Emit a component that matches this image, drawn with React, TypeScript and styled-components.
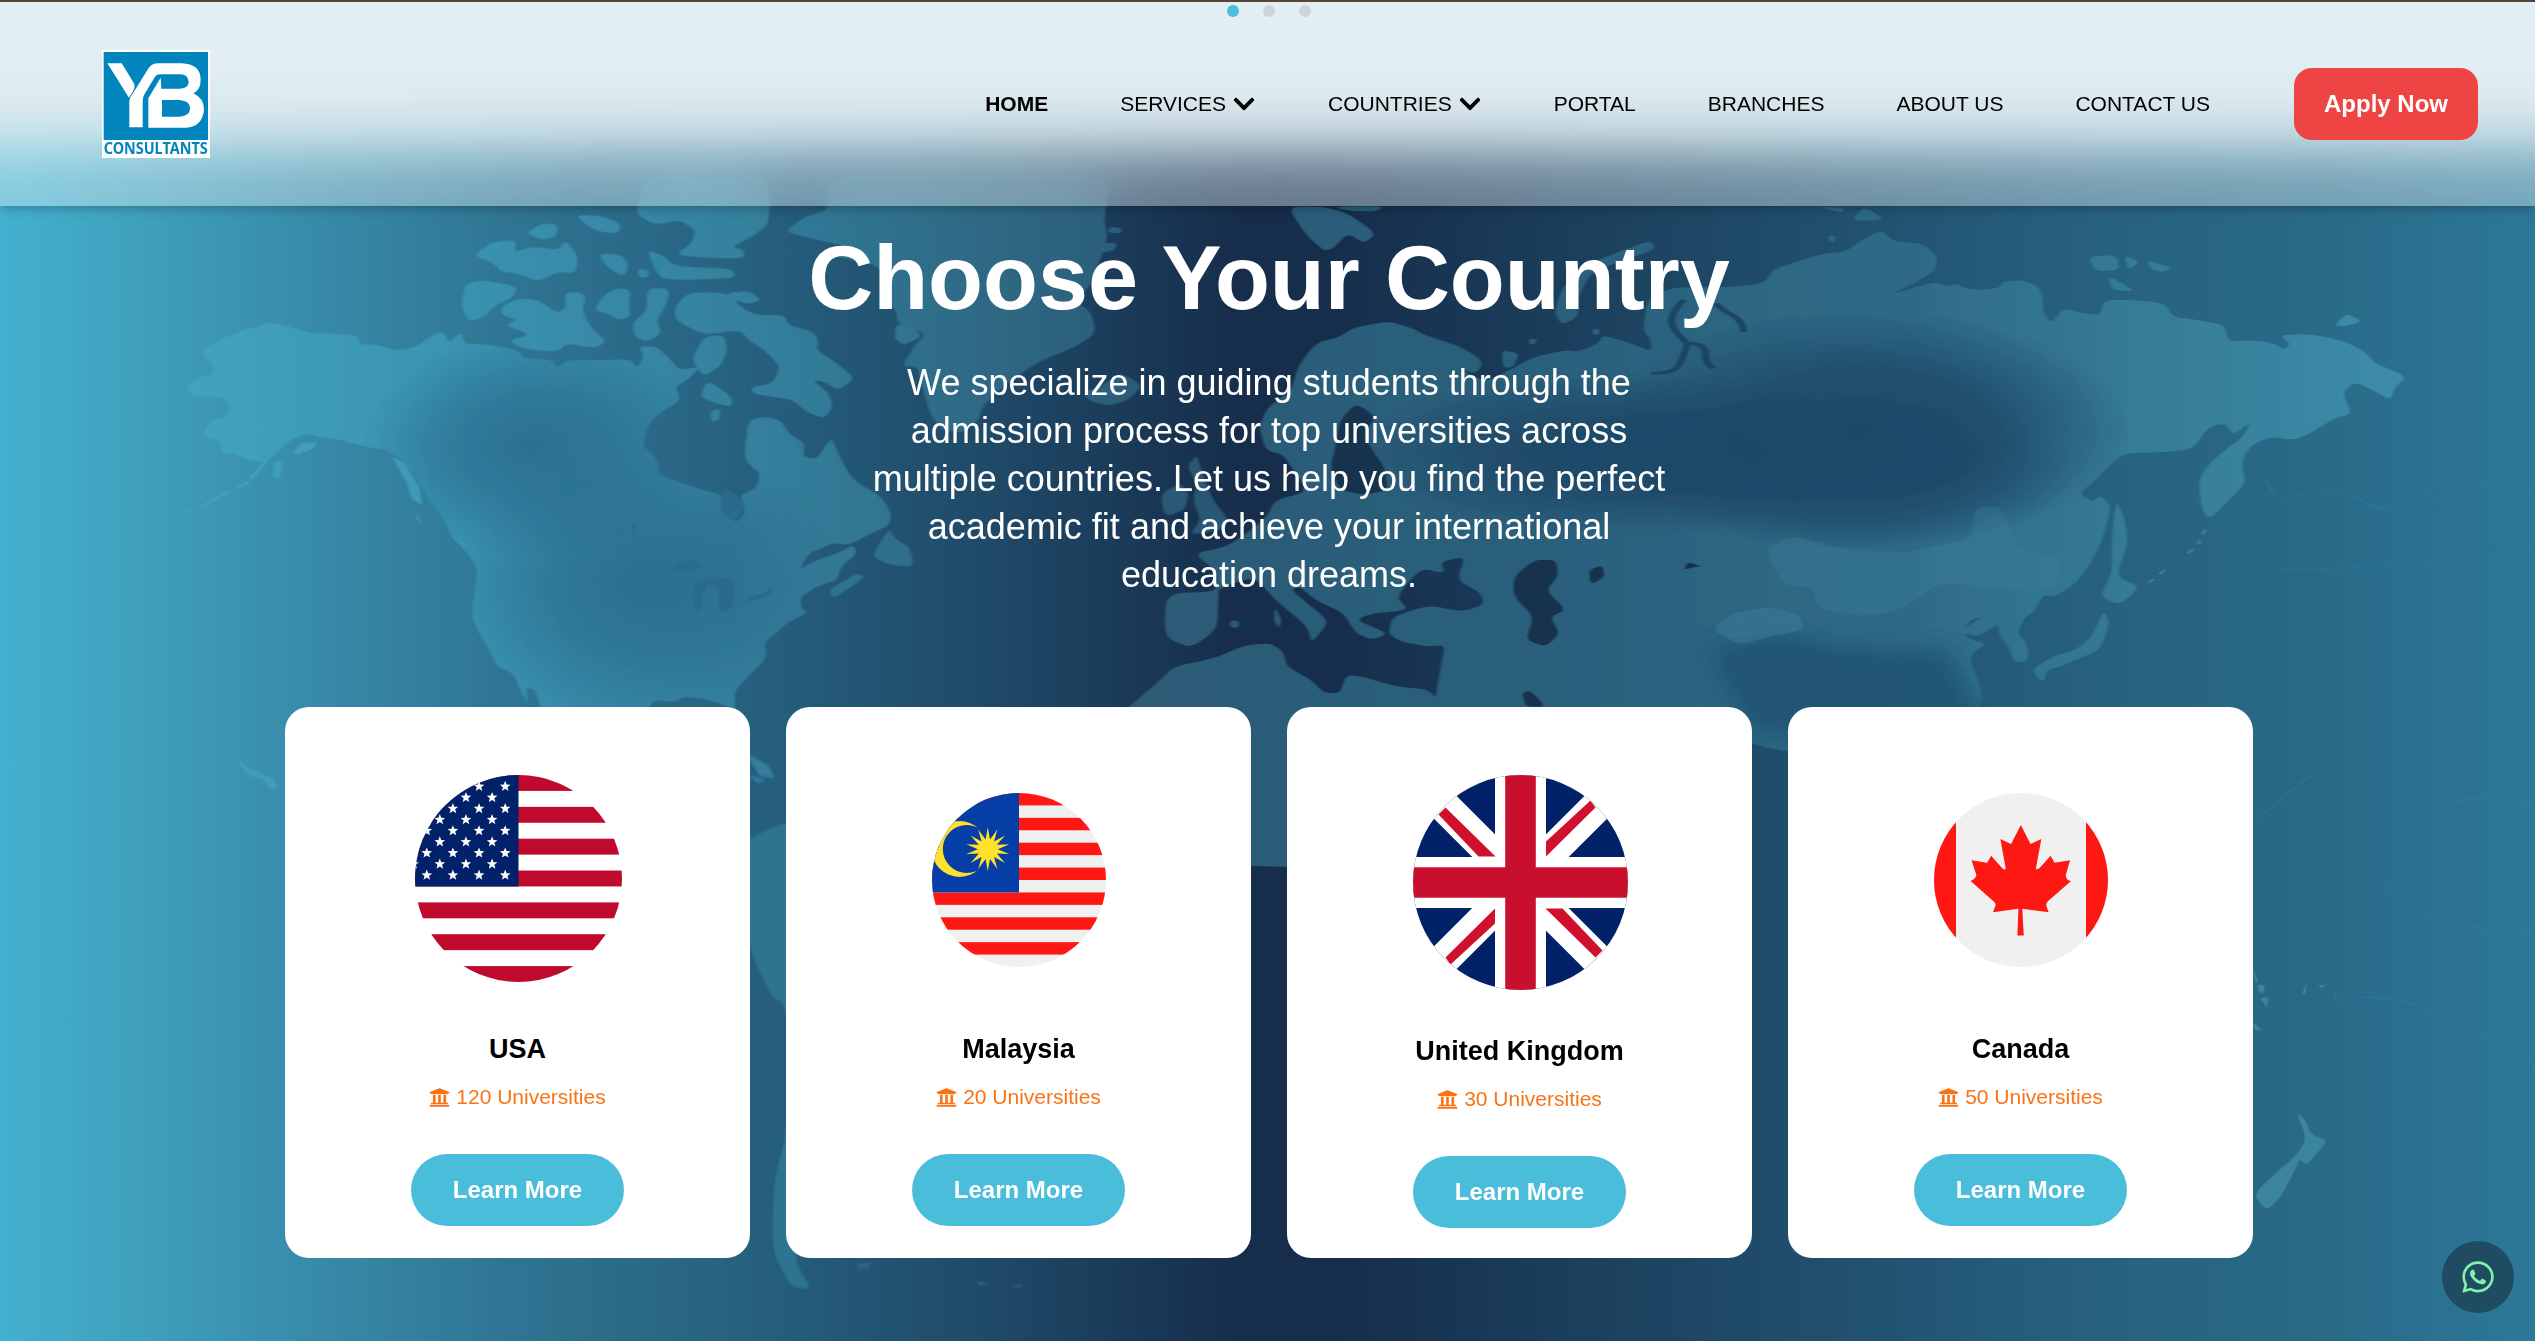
import React from "react";
import styled, { createGlobalStyle } from "styled-components";
import { FaChevronDown, FaUniversity, FaWhatsapp } from "react-icons/fa";

const GlobalStyle = createGlobalStyle`
  *, *::before, *::after { box-sizing: border-box; }
  body {
    margin: 0;
    font-family: "Liberation Sans", Arial, sans-serif;
    background: #2c6f8e;
    overflow: hidden;
  }
`;

const Page = styled.div`
  position: relative;
  height: 1341px;
  overflow: hidden;
  display: flex;
  flex-direction: column;
`;

const Header = styled.header`
  position: absolute;
  inset: 0 0 auto 0;
  z-index: 10;
  height: 206px;
  padding: 0 57px 0 102px;
  border-top: 2px solid #5a423c;
  display: flex;
  align-items: center;
  justify-content: space-between;
  background:
    linear-gradient(
      to bottom,
      rgba(225, 238, 244, 1) 60px,
      rgba(223, 236, 241, 0.98) 92px,
      rgba(219, 233, 238, 0.93) 110px,
      rgba(216, 232, 238, 0.85) 122px,
      rgba(214, 232, 238, 0.72) 134px,
      rgba(210, 231, 238, 0.54) 146px,
      rgba(205, 231, 238, 0.37) 158px,
      rgba(200, 231, 238, 0.22) 170px,
      rgba(190, 231, 240, 0.12) 182px,
      rgba(180, 231, 240, 0.06) 196px,
      rgba(170, 231, 240, 0.04) 204px
    ),
    rgba(255, 255, 255, 0.35);
  backdrop-filter: blur(24px);
  box-shadow: 0 6px 9px -1px rgba(0, 0, 0, 0.14), 0 3px 6px -2px rgba(0, 0, 0, 0.1);
`;

const Dots = styled.div`
  position: absolute;
  z-index: 11;
  top: 5px;
  left: 1227px;
  display: flex;
  gap: 24px;
`;

const Dot = styled.span<{ $active?: boolean }>`
  width: 12px;
  height: 12px;
  border-radius: 50%;
  background: ${(p) => (p.$active ? "#4abfdc" : "#d1d3dc")};
`;

const Nav = styled.nav`
  display: flex;
  align-items: center;
  gap: 72px;
  margin-left: auto;
  margin-right: 84px;
`;

const NavLink = styled.a<{ $active?: boolean }>`
  display: flex;
  align-items: center;
  gap: 6px;
  font-size: 21px;
  line-height: 30px;
  color: #000;
  white-space: nowrap;
  font-weight: ${(p) => (p.$active ? 700 : 400)};
  svg { font-size: 24px; }
`;

const ApplyButton = styled.button`
  width: 184px;
  height: 72px;
  border: 0;
  border-radius: 18px;
  background: #ef4444;
  color: #fff;
  font: 700 24px/36px "Liberation Sans", Arial, sans-serif;
  padding: 0;
  white-space: nowrap;
`;

const Hero = styled.section`
  position: relative;
  flex: 1;
  padding: 233px 0 0 3px;
  display: flex;
  flex-direction: column;
  align-items: center;
`;

const MapSvg = styled.svg`
  position: absolute;
  inset: 0;
  width: 2535px;
  height: 1341px;
`;

const Title = styled.h1`
  position: relative;
  margin: 0;
  color: #fff;
  font-size: 90px;
  line-height: 90px;
  font-weight: 700;
`;

const Lead = styled.p`
  position: relative;
  margin: 36px 0 108px;
  width: 828px;
  color: #fff;
  text-align: center;
  font-size: 36px;
  line-height: 48px;
`;

const Cards = styled.div`
  position: relative;
  display: grid;
  grid-template-columns: repeat(4, 465px);
  gap: 36px;
`;

const Card = styled.article`
  height: 551px;
  border-radius: 24px;
  background: #fff;
  display: flex;
  flex-direction: column;
  align-items: center;
`;

const FlagBox = styled.div<{ $top: number; $height: number }>`
  flex: none;
  height: ${(p) => p.$height}px;
  padding: ${(p) => p.$top}px 0 0 1px;
  svg { display: block; }
`;

const Country = styled.h3`
  margin: 0 0 12px;
  font-size: 27px;
  line-height: 42px;
  color: #000;
`;

const Count = styled.p`
  margin: 0 0 42px;
  display: flex;
  align-items: center;
  gap: 6px;
  font-size: 21px;
  line-height: 30px;
  color: #f97316;
`;

const LearnMore = styled.button`
  flex: none;
  width: 213px;
  height: 72px;
  border: 0;
  border-radius: 36px;
  background: #4abddb;
  color: #fff;
  font: 700 24px/36px "Liberation Sans", Arial, sans-serif;
  padding: 0;
`;

const ChatButton = styled.button`
  position: absolute;
  z-index: 12;
  left: 2442px;
  top: 1241px;
  width: 72px;
  height: 72px;
  padding: 0;
  border: 0;
  border-radius: 50%;
  background: #1f4c60;
  color: #86efac;
  display: flex;
  align-items: center;
  justify-content: center;
  svg { font-size: 36px; }
`;

const LogoSvg = styled.svg`
  flex: none;
  overflow: visible;
`;

const Logo = () => (
  <LogoSvg width="108" height="108" viewBox="66 60 324 324">
    <rect x="66" y="60" width="324" height="324" fill="#fff" />
    <rect x="71" y="66" width="313" height="264" fill="#0284bd" />
    <path d="M82 100H125L161 158Q167 170 159 184L147 203Z" fill="#fff" />
    <path
      d="M148 292V216C148 204 152 200 160 188L206 114Q215 100 235 100H305Q362 102 362 150Q362 180 340 190Q372 205 372 238Q368 290 320 293H205V205L242 143L244 176H300Q326 174 326 155Q324 133 300 133H240Q230 133 225 140L192 195Q188 203 188 215V292Z"
      fill="#fff"
    />
    <path d="M246 210H300Q330 213 330 235Q330 258 300 260H246Z" fill="#0284bd" />
    <text x="71" y="373" fontFamily="'Noto Sans', 'Open Sans', sans-serif" fontWeight="700" fontSize="46" textLength="312" lengthAdjust="spacingAndGlyphs" fill="#0284bd">
      CONSULTANTS
    </text>
  </LogoSvg>
);

const starPath = (cx: number, cy: number, r: number, inner: number, points: number) => {
  const pts: string[] = [];
  for (let i = 0; i < points * 2; i++) {
    const a = (Math.PI * i) / points - Math.PI / 2;
    const rad = i % 2 ? inner : r;
    pts.push(`${(cx + rad * Math.cos(a)).toFixed(2)},${(cy + rad * Math.sin(a)).toFixed(2)}`);
  }
  return pts.join(" ");
};

const UsaFlag = () => {
  const size = 207;
  const stripe = size / 13;
  const stars: React.ReactNode[] = [];
  for (let row = 0; row < 9; row++) {
    for (let col = 0; col < 4; col++) {
      const x = 90.2 - col * 26.15 - (row % 2 ? 13.1 : 0);
      const y = 11.4 + row * 11.1;
      stars.push(<polygon key={`${row}-${col}`} points={starPath(x, y, 5.6, 2.4, 5)} fill="#fff" />);
    }
  }
  return (
    <svg width={size} height={size}>
      <clipPath id="usa"><circle cx={size / 2} cy={size / 2} r={size / 2} /></clipPath>
      <g clipPath="url(#usa)">
        <rect width={size} height={size} fill="#fff" />
        {[0, 2, 4, 6, 8, 10, 12].map((i) => (
          <rect key={i} y={i * stripe} width={size} height={stripe} fill="#bf0a2d" />
        ))}
        <rect width={size / 2} height={stripe * 7} fill="#012169" />
        {stars}
      </g>
    </svg>
  );
};

const MalaysiaFlag = () => {
  const size = 174;
  const stripe = size / 14;
  return (
    <svg width={size} height={size}>
      <clipPath id="mys"><circle cx="87" cy="87" r="87" /></clipPath>
      <g clipPath="url(#mys)">
        <rect width={size} height={size} fill="#f0f0f0" />
        {[0, 2, 4, 6, 8, 10, 12].map((i) => (
          <rect key={i} y={i * stripe} width={size} height={stripe} fill="#ff1713" />
        ))}
        <rect width="87" height={stripe * 8} fill="#063ea8" />
        <circle cx="27.6" cy="56" r="28" fill="#ffe02c" />
        <circle cx="34.8" cy="56" r="24" fill="#063ea8" />
        <polygon points={starPath(55.8, 56.2, 22, 10, 14)} fill="#ffe02c" />
      </g>
    </svg>
  );
};

const UkFlag = () => (
  <svg width="215" height="215" viewBox="-107.5 -107.5 215 215">
    <clipPath id="gbr"><circle r="107.5" /></clipPath>
    <g clipPath="url(#gbr)">
      <rect x="-108" y="-108" width="216" height="216" fill="#012169" />
      <path d="M-108-108L108 108M-108 108L108-108" stroke="#fff" strokeWidth="32" />
      <path d="M0-108V108M-108 0H108" stroke="#fff" strokeWidth="51" />
      {[0, 180].map((deg) => (
        <g key={deg} transform={`rotate(${deg})`} fill="#d0112e">
          <path d="M-75-75L-25-26H-42L-82-68Z" />
          <path d="M70-82L25.5-41V-26L75-75Z" />
        </g>
      ))}
      <path d="M0-108V108M-108 0H108" stroke="#c8102e" strokeWidth="30.6" />
    </g>
  </svg>
);

const CanadaFlag = () => (
  <svg width="174" height="174">
    <clipPath id="can"><circle cx="87" cy="87" r="87" /></clipPath>
    <g clipPath="url(#can)">
      <rect width="174" height="174" fill="#f0f0f0" />
      <rect width="22" height="174" fill="#ff1713" />
      <rect x="152" width="22" height="174" fill="#ff1713" />
      <path
        transform="scale(.4878 .4151) translate(-335 -247)"
        d="M513 324L493 370L471 358L482 428Q480 434 475 428L452 398L444 415L412 409L422 445Q421 453 410 459L457 508Q462 514 461 518L456 534L508 526L506 590H519L516 526L570 534L565 518Q565 511 569 507L616 459Q606 458 605 445L614 409L582 415L574 398L551 428Q544 433 544 428L555 358L533 370Z"
        fill="#ff1713"
      />
    </g>
  </svg>
);

/** Rounds the corners of a closed polygon path so that coastlines look natural. */
const coast = (d: string, round = 0.34) =>
  d
    .split("Z")
    .filter((s) => s.trim())
    .map((sub) => {
      const pts: [number, number][] = [];
      for (const [, cmd, args] of sub.matchAll(/([MLHV])([^MLHV]*)/g)) {
        const n = args.trim().split(/[\s,]+/).map(Number);
        const last = pts[pts.length - 1];
        if (cmd === "H") pts.push([n[0], last[1]]);
        else if (cmd === "V") pts.push([last[0], n[0]]);
        else pts.push([n[0], n[1]]);
      }
      const mix = (a: [number, number], b: [number, number], t: number) =>
        `${(a[0] + (b[0] - a[0]) * t).toFixed(1)} ${(a[1] + (b[1] - a[1]) * t).toFixed(1)}`;
      return (
        pts
          .map((p, i) => {
            const prev = pts[(i + pts.length - 1) % pts.length];
            const next = pts[(i + 1) % pts.length];
            return `${i ? "L" : "M"}${mix(p, prev, round)}Q${p[0]} ${p[1]} ${mix(p, next, round)}`;
          })
          .join("") + "Z"
      );
    })
    .join("");

const NORTH_AMERICA = coast(
  "M332 366L355 378L385 400L432 402L443 412L444 432L470 436L490 452L515 440L530 412L548 392L555 428L570 395L575 432L600 432L640 450L648 475L680 478L690 505L700 480L745 480L780 478L788 505L796 470L790 440L812 440L830 480L840 510L866 500L850 540L835 560L842 600L815 640L800 680L795 740L812 775L815 825L845 850L870 870L893 885L890 930L910 970L922 940L915 885L935 865L940 820L920 780L925 660L945 650L965 660L975 700L995 730L993 770L1010 778L1025 720L1030 720L1040 780L1055 840L1090 890L1102 940L1100 975L1070 1010L1050 1035L1030 1030L1015 1045L1000 1060L988 1110L1005 1085L1035 1060L1055 1035L1060 1060L1040 1100L1035 1140L1010 1160L990 1190L990 1220L998 1240L975 1265L960 1300L945 1325L948 1375L925 1430L908 1475L910 1530L895 1515L870 1495L845 1490L835 1505L805 1500L795 1600H690L668 1520L662 1470L650 1460L652 1500L656 1520L645 1480L635 1420L615 1400L605 1350L590 1290L583 1240L588 1160L590 1100L575 1050L557 1010L550 960L530 900L520 850L500 790L480 750L450 740L415 715L395 712L380 700L355 725L345 755L325 790L300 775L290 760L275 760L270 720L250 710L258 665L280 650L285 610L272 590L240 590L230 560L245 530L262 525L265 500L247 455L270 420L300 390L320 380Z",
);

const ARCTIC = [
  "M850 280L880 275L905 285L915 320L935 345L970 345L975 375L1005 395L1012 420L1010 450L1035 490L1055 530L1050 550L1035 570L1020 545L1005 540L1025 580L1030 620L1020 655L1000 640L980 600L955 590L930 580L930 560L955 550L965 500L945 450L925 420L915 390L870 405L835 360L835 320Z",
  "M620 320L640 295L665 300L690 340L700 320L698 280L715 275L725 290L720 330L730 380L750 425L735 445L700 430L690 455L660 450L640 440L630 420L655 405L625 375L640 360L620 345Z",
  "M575 250L600 240L640 260L635 290L610 320L600 350L580 365L570 320Z",
  "M585 165L610 125L640 120L635 155L660 140L690 150L700 120L715 170L712 220L690 215L665 245L640 220L620 215L610 190Z",
  "M650 100L670 70L690 75L688 110L670 120Z",
  "M712 45L740 45L768 70L765 100L740 95L725 75Z",
  "M735 330L745 290L760 265L780 268L778 310L780 350L765 360L750 340Z",
  "M800 265L828 265L825 310L812 360L818 400L800 425L785 410L782 370L800 330Z",
  "M870 410L895 405L900 450L890 500L870 530L855 480Z",
  "M875 540L905 590L905 620L885 610L865 590Z",
  "M878 635L890 625L890 660L880 665Z",
  "M785 40L800 -80H950L952 70L930 110L905 140L920 150V175H880L835 165L855 130L860 90L840 60L810 75Z",
  "M800 150L820 165L835 200L905 205L910 235L840 240L815 235Z",
  "M740 160L770 165L778 200L770 230L750 200Z",
  "M790 205L803 212L800 235L788 228Z",
  "M898 280L925 272L942 300L925 312L905 298Z",
  "M1108 370L1130 380L1140 410L1118 435L1106 415Z",
].map((d) => coast(d));

const GREENLAND = coast(
  "M970 95L995 50L1025 30L1025 -80H1375L1365 60L1370 110L1360 180L1350 250L1330 300L1350 340L1355 400L1330 440L1280 490L1240 560L1215 620L1210 660L1190 700L1165 690L1150 640L1140 560L1135 500L1115 500L1130 440L1145 400L1110 370L1108 330L1090 290L1100 240L1080 190L1030 170L1050 140L1010 120Z",
);

const ATLANTIC = [
  "M1340 575L1360 560L1385 520L1400 535L1412 560L1395 600L1370 618L1345 600Z",
  "M1100 985L1108 1020L1125 1040L1130 1100L1100 1095L1080 1070L1085 1040Z",
  "M1060 1120L1070 1130L1050 1165L1030 1195L1025 1170L1045 1140Z",
  "M1435 880L1460 850L1470 880L1465 930L1440 950Z",
  "M1468 800L1480 762L1488 830L1500 900L1520 960L1510 990L1470 1005L1485 960L1475 900L1480 850Z",
  "M1372 80L1388 85L1386 100L1370 98Z",
  "M1362 130L1382 128L1378 150L1362 160Z",
].map((d) => coast(d));

const LAKES = coast(
  "M825 1115L850 1075L870 1100L860 1110L840 1110ZM858 1150L880 1130L908 1135L908 1220L890 1240L888 1160L872 1150L866 1230L858 1230ZM920 1200L955 1165L955 1180L930 1205ZM780 960L786 980L784 1010ZM894 860L908 880L922 910L910 970L890 930Z",
);

const EURASIA = coast(
  "M-10 680L0 625L30 570L38 500L60 430L90 410L105 385L150 363L180 385L195 405L240 440L268 485L258 522L235 505L270 545L300 510L330 470L370 450L385 455L410 430L415 405L450 430L475 455L475 420L465 390L470 300L500 262L570 262L615 250L625 210L660 180L690 160L715 155L735 120L760 90L775 125L810 130L830 170L825 215L800 250L770 285L825 245L845 260L850 250L870 270L905 265L910 245L935 240L955 260L960 300L960 340L970 370L985 325L1010 340L1030 345L1035 300L1075 300L1110 310L1120 350L1150 360L1185 375L1188 425L1220 420L1245 430L1258 450L1265 430L1252 405L1290 402L1335 425L1360 460L1370 490L1410 530L1395 560L1390 600L1370 575L1345 545L1330 580L1342 640L1320 655L1290 700L1270 720L1240 710L1215 740L1205 790L1210 850L1190 900L1165 960L1155 920L1152 840L1165 790L1190 740L1205 715L1217 665L1195 705L1185 670L1165 680L1145 745L1120 755L1060 760L1040 800L1020 850L1005 880L1020 905L1030 885L1045 920L1030 1040L1005 1140L975 1190L960 1185L950 1230L935 1260L928 1300L940 1330L942 1380L925 1390L915 1330L905 1305L905 1270L880 1310L855 1295L885 1250L870 1260L860 1290L870 1320L890 1330L868 1370L880 1440L885 1500L880 1525L860 1660H640L560 1600H200L215 1400L220 1335L200 1340L165 1325L150 1300L155 1250L200 1215L240 1235L268 1215L265 1180L235 1140L245 1070L215 1085L220 1120L190 1105L160 1190L175 1230L130 1240L110 1260L150 1300L130 1320L110 1300L95 1240L60 1200L40 1160L30 1170L70 1250L75 1270L55 1330L50 1280L10 1200L-15 1130L-60 1165L-60 1200L-62 1290L-95 1345L-127 1310L-125 1180L-60 1175L-65 1110L-90 1060L-50 1040L-20 990L0 950L10 900L50 875L30 800L20 765L-2 750Z",
);

const EURASIAN_ISLANDS = [
  "M1050 900L1060 950L1065 1030L1050 1130L1080 1160L1055 1215L1030 1190L1045 1120L1045 1000Z",
  "M1035 1230L1042 1270L1030 1350L1000 1380L980 1400L965 1410L960 1450L945 1410L970 1370L1000 1350L1020 1310Z",
  "M25 20L70 20L100 40L135 100L120 130L100 100L75 160L50 110Z",
  "M80 20L145 18L135 35L100 32Z",
  "M475 120L480 150L440 180L400 220L385 290L385 350L365 375L355 340L365 260L400 190L430 160Z",
  "M680 20L715 25L710 38Z",
  "M722 62L738 18L765 60Z",
  "M1015 170L1050 165L1055 210L1025 215Z",
  "M1060 165L1080 185L1065 210Z",
  "M1088 180L1120 205L1105 217L1092 205Z",
  "M1040 225L1075 275L1045 270Z",
  "M1320 375L1335 340L1355 365L1330 380Z",
  "M403 385L412 388L410 405L402 402Z",
  "M325 415L335 420L330 435L323 430Z",
  "M695 105L704 112L700 128L694 120Z",
  "M290 450L312 460L305 500L292 505Z",
  "M10 1220L18 1260L15 1285L8 1260Z",
  "M-45 1260L-34 1265L-36 1285L-46 1280Z",
].map((d) => coast(d));

const SEAS = [
  "M90 870L120 885L150 870L145 800L130 750L120 700L135 650L110 610L90 660L85 740L78 800Z",
  "M305 1130L330 1080L358 1080L360 1130L345 1170L370 1230L350 1250L362 1300L345 1340L320 1320L330 1250L305 1190Z",
  "M398 1110L415 1095L418 1130L400 1155Z",
  "M515 1110L520 1085L550 1110L535 1097Z",
  "M315 1480L325 1470L345 1520L320 1520Z",
].map((d) => coast(d));

const AFRICA = coast(
  "M-132 1440L-115 1400L-65 1375L-27 1335L5 1330L20 1355L25 1400L55 1440L70 1478L90 1480L98 1425L118 1430L160 1460L205 1470L230 1600L60 2000H-10L-45 1990L-100 1800L-190 1560Z",
);

const WorldMap = () => (
  <MapSvg viewBox="0 0 2535 1341">
    <defs>
      <linearGradient id="sea" gradientUnits="userSpaceOnUse" x1="0" y1="0" x2="2535" y2="0">
        <stop offset="0" stopColor="#43b0cf" />
        <stop offset=".055" stopColor="#3fa0bd" />
        <stop offset=".115" stopColor="#388dab" />
        <stop offset=".2" stopColor="#2f7593" />
        <stop offset=".3" stopColor="#265f7e" />
        <stop offset=".4" stopColor="#1e4765" />
        <stop offset=".49" stopColor="#162d4b" />
        <stop offset=".53" stopColor="#162e4c" />
        <stop offset=".62" stopColor="#1b3f5c" />
        <stop offset=".7" stopColor="#1f4c6a" />
        <stop offset=".82" stopColor="#27607f" />
        <stop offset=".92" stopColor="#296b89" />
        <stop offset="1" stopColor="#2d7797" />
      </linearGradient>
      <linearGradient id="landWest" gradientUnits="userSpaceOnUse" x1="200" y1="0" x2="1568" y2="0">
        <stop offset="0" stopColor="#42a5c2" />
        <stop offset=".3" stopColor="#3991af" />
        <stop offset=".55" stopColor="#347f9c" />
        <stop offset=".75" stopColor="#316d88" />
        <stop offset="1" stopColor="#2c5a75" />
      </linearGradient>
      <linearGradient id="landEast" gradientUnits="userSpaceOnUse" x1="-130" y1="0" x2="1410" y2="0">
        <stop offset="0" stopColor="#2d5b77" />
        <stop offset=".3" stopColor="#2b607c" />
        <stop offset=".6" stopColor="#2f6b87" />
        <stop offset=".8" stopColor="#367d99" />
        <stop offset="1" stopColor="#3d8da8" />
      </linearGradient>
      <radialGradient id="naShade">
        <stop offset="0" stopColor="#29698b" stopOpacity=".8" />
        <stop offset=".5" stopColor="#29698b" stopOpacity=".55" />
        <stop offset="1" stopColor="#29698b" stopOpacity="0" />
      </radialGradient>
      <radialGradient id="asiaShade">
        <stop offset="0" stopColor="#1d4767" stopOpacity=".95" />
        <stop offset=".5" stopColor="#1d4767" stopOpacity=".75" />
        <stop offset="1" stopColor="#1d4767" stopOpacity="0" />
      </radialGradient>
      <filter id="soft"><feGaussianBlur stdDeviation="1.2" /></filter>
      <filter id="haze" x="-50%" y="-50%" width="200%" height="200%"><feGaussianBlur stdDeviation="16 30" /></filter>
      <clipPath id="naClip"><path d={NORTH_AMERICA} /></clipPath>
      <clipPath id="euClip"><path d={EURASIA} /></clipPath>
    </defs>
    <rect width="2535" height="1341" fill="url(#sea)" />

    <g transform="translate(0 200) scale(.80867 .33333)" filter="url(#soft)">
      <g fill="url(#landWest)">
        <path d={NORTH_AMERICA} />
        {ARCTIC.map((d) => <path key={d} d={d} />)}
        <path d={GREENLAND} opacity=".88" />
        {ATLANTIC.map((d) => <path key={d} d={d} opacity=".85" />)}
      </g>
      <g clipPath="url(#naClip)" fill="url(#naShade)">
        <ellipse cx="660" cy="740" rx="210" ry="330" />
        <ellipse cx="800" cy="1150" rx="240" ry="420" />
      </g>
      <path d={LAKES} fill="#2b6a8a" />
      <path d="M330 780L305 850L275 885L245 925L215 945" fill="none" stroke="#42a5c2" strokeWidth="5" strokeDasharray="60 8 25 12" opacity=".8" />
      <path d="M362 760L372 730L392 725L388 745L368 765ZM338 790L350 780L345 840L338 830ZM485 770L500 790L518 860L522 915L510 900L503 850ZM513 930L522 975L516 960Z" fill="#45a6c3" opacity=".7" />
    </g>

    <g transform="translate(1267 200) scale(.80867 .33333)" filter="url(#soft)">
      <g fill="url(#landEast)">
        <path d={EURASIA} />
        <path d={AFRICA} />
        {EURASIAN_ISLANDS.map((d) => <path key={d} d={d} />)}
      </g>
      <g clipPath="url(#euClip)">
        <g fill="url(#asiaShade)">
          <ellipse cx="740" cy="690" rx="330" ry="360" />
          <ellipse cx="440" cy="760" rx="330" ry="250" />
          <ellipse cx="720" cy="820" rx="280" ry="230" opacity=".7" />
        </g>
        <path d="M545 1350L640 1300L700 1340L840 1350L900 1600H600Z" fill="#1f5070" opacity=".75" filter="url(#haze)" />
        <path d={coast("M615 1050L650 1005L690 1035L725 1050L790 1060L830 1035L870 1020L875 920L910 920L930 1050L985 1070L970 1180L880 1160L830 1150L790 1220L750 1250L680 1230L675 1160L640 1160Z")} fill="#3f829c" opacity=".32" />
        <path d={coast("M550 1290L575 1240L620 1220L660 1245L665 1290L620 1310L585 1335Z")} fill="#4080a0" opacity=".45" />
      </g>
      <g fill="#16304e">
        {SEAS.map((d) => <path key={d} d={d} />)}
      </g>
      <path d="M590 395Q588 360 575 345T555 310M515 300Q495 350 502 380T520 430Q514 480 508 500T475 520M520 430Q542 430 542 460T552 505" fill="none" stroke="#1d4563" strokeWidth="9" />
      <path d="M1235 840L1245 880M1260 890Q1330 860 1360 910T1440 860Q1490 815 1568 880M1250 1110Q1400 1105 1568 1040" fill="none" stroke="#3580a0" strokeWidth="5" opacity=".35" />
      <path d="M1160 990L1150 1040L1130 1075M1110 1110L1090 1150" fill="none" stroke="#3b83a0" strokeWidth="4" strokeDasharray="14 16" />
    </g>

    <g transform="translate(1770 690) scale(.4878 .4151)" fill="#3b85a0" filter="url(#soft)">
      <path d={coast("M1078 1015L1100 1040L1108 1070L1145 1085L1100 1145L1085 1130L1075 1160L1045 1225L1018 1255L990 1215L1040 1160L1080 1120L1100 1080Z")} />
      <path d="M990 670L1000 700L995 705ZM1000 710L1014 712L1012 730L1002 728ZM1005 742L1022 740L1018 765ZM985 795L1008 820L995 820ZM1090 735L1100 705L1098 730ZM1122 712L1140 710L1132 718ZM1152 715L1168 762L1158 740Z" />
      <path d="M1000 310L1060 250L1110 205M1400 270Q1480 245 1560 280M1200 740Q1300 735 1420 800T1568 910M1250 450Q1330 590 1560 575" fill="none" stroke="#3988a8" strokeWidth="3" opacity=".4" />
    </g>

    <g filter="url(#soft)">
      <path d={coast("M735 850L750 838L786 821L830 830L900 900L960 960L930 1080L850 1180L800 1230L795 1262L812 1290L790 1286L772 1250L774 1180L786 1137L790 1060L786 1006L770 995L748 945Z")} fill="#2e7390" />
      <path d="M744 752L768 765L775 778L760 776ZM748 775L766 780L758 783Z" fill="#347f9c" />
      <path d="M856 1264L872 1262L868 1268L858 1269ZM975 1281L990 1283L980 1286ZM1010 1286L1024 1284L1018 1288Z" fill="#2b6583" />
      <path d="M233 755L244 765L258 772L272 778L279 787L272 790L262 779L248 775Z" fill="#45a5c2" opacity=".7" />
    </g>
  </MapSvg>
);

type CountryInfo = { name: string; count: number; flag: React.ReactNode; top: number; area: number };

const countries: CountryInfo[] = [
  { name: "USA", count: 120, flag: <UsaFlag />, top: 68, area: 321 },
  { name: "Malaysia", count: 20, flag: <MalaysiaFlag />, top: 85.5, area: 321 },
  { name: "United Kingdom", count: 30, flag: <UkFlag />, top: 68, area: 323 },
  { name: "Canada", count: 50, flag: <CanadaFlag />, top: 85.5, area: 321 },
];

const links: { label: string; active?: boolean; menu?: boolean }[] = [
  { label: "HOME", active: true },
  { label: "SERVICES", menu: true },
  { label: "COUNTRIES", menu: true },
  { label: "PORTAL" },
  { label: "BRANCHES" },
  { label: "ABOUT US" },
  { label: "CONTACT US" },
];

export default function App() {
  return (
    <Page>
      <GlobalStyle />
      <Header>
        <Logo />
        <Nav>
          {links.map((l) => (
            <NavLink key={l.label} $active={l.active}>
              {l.label}
              {l.menu && <FaChevronDown />}
            </NavLink>
          ))}
        </Nav>
        <ApplyButton>Apply Now</ApplyButton>
      </Header>
      <Dots>
        <Dot $active />
        <Dot />
        <Dot />
      </Dots>
      <Hero>
        <WorldMap />
        <Title>Choose Your Country</Title>
        <Lead>
          We specialize in guiding students through the admission process for top universities across multiple
          countries. Let us help you find the perfect academic fit and achieve your international education dreams.
        </Lead>
        <Cards>
          {countries.map((c) => (
            <Card key={c.name}>
              <FlagBox $top={c.top} $height={c.area}>{c.flag}</FlagBox>
              <Country>{c.name}</Country>
              <Count>
                <FaUniversity />
                <span>{c.count} Universities</span>
              </Count>
              <LearnMore>Learn More</LearnMore>
            </Card>
          ))}
        </Cards>
      </Hero>
      <ChatButton aria-label="WhatsApp">
        <FaWhatsapp />
      </ChatButton>
    </Page>
  );
}
